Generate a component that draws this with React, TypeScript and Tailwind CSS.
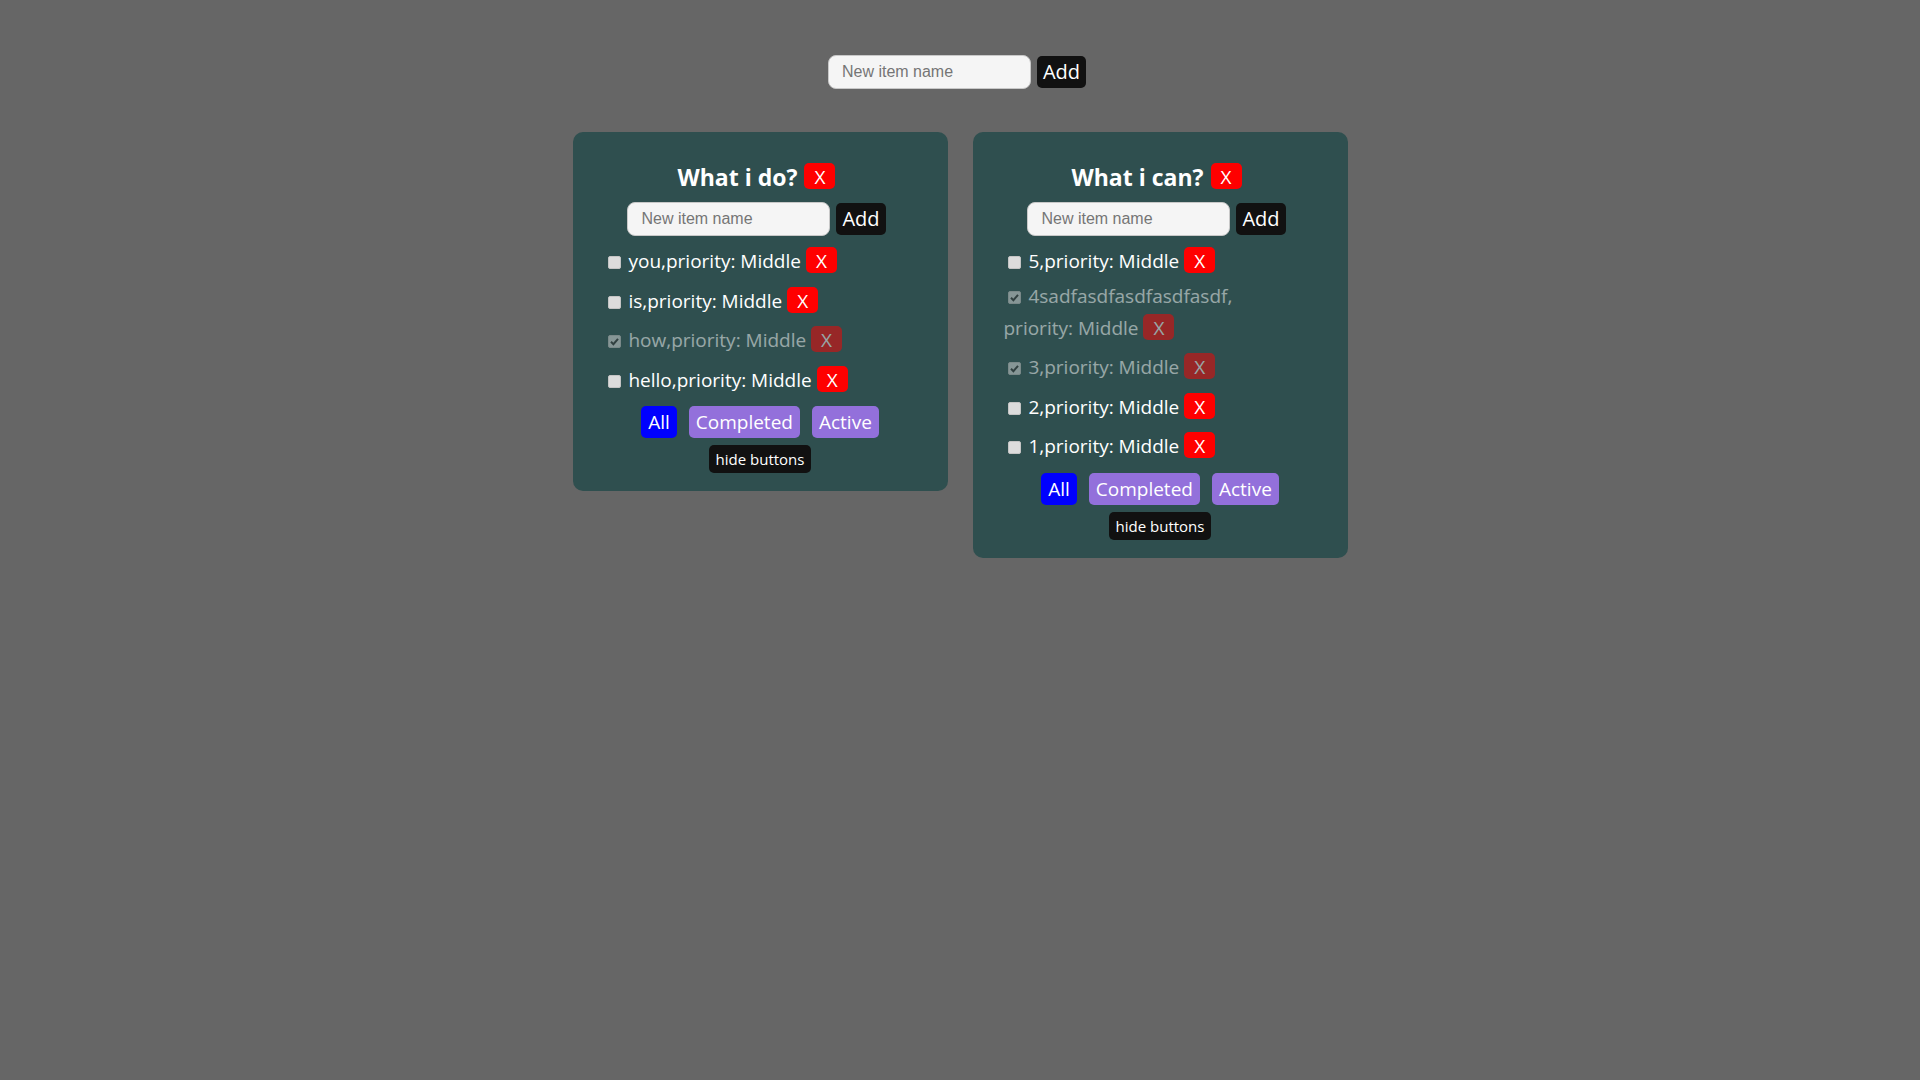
import { useState } from "react";

type Item = { id: number; title: string; done: boolean; wrap?: boolean };
type Filter = "all" | "completed" | "active";

const initialLists = [
  {
    id: 1,
    title: "What i do?",
    items: [
      { id: 1, title: "you", done: false },
      { id: 2, title: "is", done: false },
      { id: 3, title: "how", done: true },
      { id: 4, title: "hello", done: false },
    ] as Item[],
  },
  {
    id: 2,
    title: "What i can?",
    items: [
      { id: 5, title: "5", done: false },
      { id: 6, title: "4sadfasdfasdfasdfasdf", done: true, wrap: true },
      { id: 7, title: "3", done: true },
      { id: 8, title: "2", done: false },
      { id: 9, title: "1", done: false },
    ] as Item[],
  },
];

function Check({ checked, onChange }: { checked: boolean; onChange: () => void }) {
  return (
    <span className="relative inline-block w-[13px] h-[13px] ml-[4px] mr-[3px] align-[-1px]">
      <input
        type="checkbox"
        checked={checked}
        onChange={onChange}
        className="absolute inset-0 appearance-none w-[13px] h-[13px] rounded-[2px] bg-[#dcdcdc] border border-[#c4c4c4]"
      />
      {checked && (
        <svg
          viewBox="0 0 13 13"
          className="absolute inset-0 w-[13px] h-[13px] pointer-events-none"
        >
          <path d="M3 6.8 L5.4 9.2 L10 3.8" fill="none" stroke="#333" strokeWidth="2" />
        </svg>
      )}
    </span>
  );
}

function AddForm({ onAdd, shift }: { onAdd: (t: string) => void; shift: string }) {
  const [text, setText] = useState("");
  return (
    <div className={`flex items-center justify-center gap-[6px] ${shift}`}>
      <input
        value={text}
        onChange={(e) => setText(e.target.value)}
        placeholder="New item name"
        className="w-[203px] h-[34px] rounded-[8px] border border-[#c8c8c8] bg-[#f5f5f5] pl-[13px] text-[16px] text-[#222] placeholder:text-[#757575] outline-none"
        style={{ fontFamily: "'Liberation Sans', Arial, sans-serif" }}
      />
      <button
        onClick={() => {
          if (text.trim()) onAdd(text.trim());
          setText("");
        }}
        className="h-[32px] px-[6px] rounded-[5px] bg-[#111111] text-white text-[20px] leading-[32px]"
      >
        Add
      </button>
    </div>
  );
}

function TodoCard({
  title,
  items,
  onRemove,
}: {
  title: string;
  items: Item[];
  onRemove: () => void;
}) {
  const [list, setList] = useState(items);
  const [filter, setFilter] = useState<Filter>("all");
  const [showButtons, setShowButtons] = useState(true);

  const visible = list.filter((i) =>
    filter === "all" ? true : filter === "completed" ? i.done : !i.done
  );

  const filterBtn = (f: Filter, label: string) => (
    <button
      onClick={() => setFilter(f)}
      className={`h-[32px] px-[7px] rounded-[5px] text-white text-[19px] leading-[32px] ${
        filter === f ? "bg-[#0000ff]" : "bg-[#9370db]"
      }`}
    >
      {label}
    </button>
  );

  return (
    <div className="w-[375px] rounded-[10px] bg-[#2f4f4f] pt-[31px] pb-[18px] flex flex-col items-center">
      <div className="flex items-center justify-center h-[26px] pr-[7px]">
        <h3 className="text-white font-bold text-[23px] leading-[26px] pt-[2px]">{title}</h3>
        <button
          onClick={onRemove}
          className="ml-[7px] h-[26px] px-[10px] pt-[2px] rounded-[5px] bg-[#ff0000] text-white text-[19px] leading-[24px]"
        >
          X
        </button>
      </div>

      <div className="mt-[13px]">
        <AddForm
          shift="pr-[7px]"
          onAdd={(t) => setList([{ id: Date.now(), title: t, done: false }, ...list])}
        />
      </div>

      <ul className="self-stretch pl-[31px] pr-[20px] mt-[7px]">
        {visible.map((item) => (
          <li
            key={item.id}
            className={`mb-[7.5px] text-[19px] leading-[27px] text-white ${
              item.done ? "opacity-50" : ""
            }`}
          >
            <Check
              checked={item.done}
              onChange={() =>
                setList(list.map((i) => (i.id === item.id ? { ...i, done: !i.done } : i)))
              }
            />{" "}
            {item.wrap ? (
              <>
                {item.title},
                <br />
                priority: Middle
              </>
            ) : (
              <>{item.title},priority: Middle</>
            )}{" "}
            <button
              onClick={() => setList(list.filter((i) => i.id !== item.id))}
              className="inline-block mt-[4px] h-[26px] px-[10px] pt-[2px] rounded-[5px] bg-[#ff0000] text-white text-[19px] leading-[24px]"
            >
              X
            </button>
          </li>
        ))}
      </ul>

      {showButtons && (
        <div className="mt-[5px] flex items-center justify-center gap-[12px]">
          {filterBtn("all", "All")}
          {filterBtn("completed", "Completed")}
          {filterBtn("active", "Active")}
        </div>
      )}
      <button
        onClick={() => setShowButtons(!showButtons)}
        className="mt-[7px] h-[28px] px-[7px] rounded-[5px] bg-[#111111] text-white text-[15px] leading-[28px]"
      >
        hide buttons
      </button>
    </div>
  );
}

export default function App() {
  const [lists, setLists] = useState(initialLists);

  return (
    <div
      className="min-h-screen w-full bg-[#666666] pt-[55px] flex flex-col items-center"
      style={{ fontFamily: "'Open Sans', 'Noto Sans', sans-serif" }}
    >
      <AddForm
        shift="pr-[6px]"
        onAdd={(t) => setLists([...lists, { id: Date.now(), title: t, items: [] }])}
      />

      <div className="mt-[43px] flex items-start justify-center gap-[25px]">
        {lists.map((l) => (
          <TodoCard
            key={l.id}
            title={l.title}
            items={l.items}
            onRemove={() => setLists(lists.filter((x) => x.id !== l.id))}
          />
        ))}
      </div>
    </div>
  );
}
